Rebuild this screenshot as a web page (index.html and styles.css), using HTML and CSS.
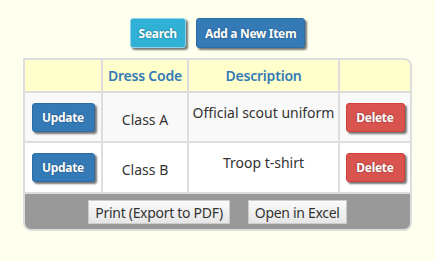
FILE: index.html
```html
<!DOCTYPE html>
<html lang="en">
<head>
    <meta charset="UTF-8">
    <title>Dress Codes</title>
    <link rel="stylesheet" href="styles.css">
</head>
<body>
    <div class="toolbar">
        <button class="btn search-btn">Search</button>
        <button class="btn add-btn">Add a New Item</button>
    </div>
    <div class="grid-wrap">
        <table class="grid">
            <thead>
                <tr>
                    <th class="col-act"></th>
                    <th class="col-code">Dress Code</th>
                    <th class="col-desc">Description</th>
                    <th class="col-del"></th>
                </tr>
            </thead>
            <tbody>
                <tr>
                    <td><button class="btn update-btn">Update</button></td>
                    <td class="mid">Class A</td>
                    <td class="top">Official scout uniform</td>
                    <td><button class="btn delete-btn">Delete</button></td>
                </tr>
                <tr>
                    <td><button class="btn update-btn">Update</button></td>
                    <td class="mid">Class B</td>
                    <td class="top">Troop t-shirt</td>
                    <td><button class="btn delete-btn">Delete</button></td>
                </tr>
            </tbody>
        </table>
        <div class="grid-footer">
            <button class="plain-btn">Print (Export to PDF)</button>
            <button class="plain-btn">Open in Excel</button>
        </div>
    </div>
</body>
</html>
```

FILE: styles.css
```css
body {
    margin: 0;
    background-color: #ffffee;
    font-family: "Noto Sans", "Open Sans", sans-serif;
    color: #333;
}
.toolbar {
    display: flex;
    justify-content: center;
    gap: 10px;
    padding-top: 18px;
}
.btn {
    font-family: "Noto Sans", sans-serif;
    font-size: 12px;
    font-weight: bold;
    letter-spacing: -0.3px;
    color: #fff;
    border: 1px solid transparent;
    border-radius: 3px;
    text-shadow: 0 0 2px rgba(0, 0, 0, 0.4);
    box-shadow: 2px 2px 2px #777;
    cursor: pointer;
}
.search-btn {
    background-color: #31b0d5;
    border-color: #8fd3ea;
    height: 30px;
    padding: 0 8px;
}
.add-btn {
    background-color: #337ab7;
    border-color: #2e6da4;
    height: 30px;
    padding: 0 8px;
}
.grid-wrap {
    width: 385px;
    margin: 10px auto 0;
    border: 2px solid #ddd;
    border-radius: 0 8px 8px 8px;
    overflow: hidden;
    background: #999;
}
.grid {
    width: 100%;
    border-collapse: collapse;
    background: #fff;
}
.grid th {
    background-color: #ffffcc;
    color: #337ab7;
    font-size: 14px;
    font-weight: 600;
    letter-spacing: -0.2px;
    height: 31px;
    padding: 0;
    border-left: 2px solid #ddd;
}
.grid th:first-child, .grid td:first-child {
    border-left: none;
}
.col-act { width: 76px; }
.col-code { width: 84px; }
.col-desc { width: 149px; }
.grid tbody tr {
    height: 50px;
}
.grid td {
    border-left: 2px solid #ddd;
    border-top: 2px solid #ddd;
    padding: 0;
    text-align: center;
    font-size: 14px;
}
.grid tbody tr:nth-child(odd) td {
    background-color: #f9f9f9;
}
.grid td.top {
    vertical-align: top;
    padding-top: 10px;
}
.grid td.mid {
    padding-top: 4px;
}
.update-btn {
    background-color: #337ab7;
    border-color: #2e6da4;
    width: 63px;
    height: 29px;
}
.delete-btn {
    background-color: #d9534f;
    border-color: #d43f3a;
    width: 59px;
    height: 29px;
}
.grid-footer {
    display: flex;
    justify-content: center;
    gap: 18px;
    border-top: 2px solid #ddd;
    padding: 6px 0 5px;
    border-radius: 0 0 8px 8px;
}
.plain-btn {
    font-family: "Noto Sans", sans-serif;
    font-size: 14px;
    letter-spacing: -0.3px;
    color: #333;
    height: 24px;
    padding: 0 6px;
    border: 1px solid #ccc;
    background: linear-gradient(#fafafa, #e6e6e6);
    cursor: pointer;
}
```
